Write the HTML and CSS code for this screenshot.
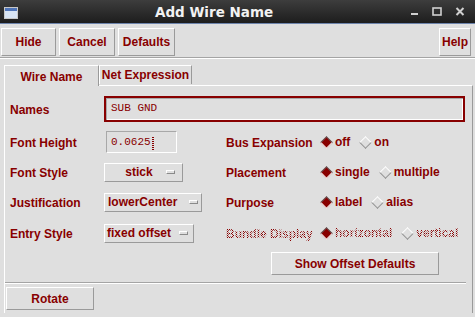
FILE: index.html
```html
<!DOCTYPE html>
<html lang="en">
<head>
    <meta charset="UTF-8">
    <title>Add Wire Name</title>
    <link rel="stylesheet" href="styles.css">
</head>
<body>
    <div class="titlebar">
        <svg class="win-icon" width="14" height="12" viewBox="0 0 14 12">
            <rect x="0.5" y="0.5" width="13" height="11" fill="#d8e4f4" stroke="#c8c8c8"/>
            <rect x="1" y="1" width="12" height="3" fill="#4f74b8"/>
        </svg>
        <span class="title">Add Wire Name</span>
        <div class="wm-controls">
            <svg width="9" height="9" viewBox="0 0 9 9"><rect x="1" y="6" width="7" height="2" fill="#d0d0d0"/></svg>
            <svg width="10" height="9" viewBox="0 0 10 9"><rect x="1" y="1" width="8" height="7" fill="none" stroke="#d0d0d0" stroke-width="1.6"/></svg>
            <svg width="10" height="9" viewBox="0 0 10 9"><path d="M1.5 1 L8.5 8 M8.5 1 L1.5 8" stroke="#d0d0d0" stroke-width="2"/></svg>
        </div>
    </div>

    <div class="toolbar">
        <button class="btn tb-hide">Hide</button>
        <button class="btn tb-cancel">Cancel</button>
        <button class="btn tb-defaults">Defaults</button>
        <button class="btn tb-help">Help</button>
    </div>

    <div class="tabs">
        <div class="tab active">Wire Name</div>
        <div class="tab">Net Expression</div>
    </div>

    <div class="panel">
        <div class="names-row">
            <span class="lbl">Names</span>
            <div class="entry names">SUB GND</div>
        </div>

        <div class="form-grid">
            <span class="lbl">Font Height</span>
            <div class="entry height">0.0625<span class="cursor"></span></div>
            <span class="lbl">Bus Expansion</span>
            <div class="radios">
                <span class="radio on"><i class="dia"></i>off</span>
                <span class="radio"><i class="dia"></i>on</span>
            </div>

            <span class="lbl">Font Style</span>
            <div class="menu menu-style"><span class="menu-text center">stick</span><i class="ind"></i></div>
            <span class="lbl">Placement</span>
            <div class="radios">
                <span class="radio on"><i class="dia"></i>single</span>
                <span class="radio"><i class="dia"></i>multiple</span>
            </div>

            <span class="lbl">Justification</span>
            <div class="menu menu-just"><span class="menu-text">lowerCenter</span><i class="ind"></i></div>
            <span class="lbl">Purpose</span>
            <div class="radios">
                <span class="radio on"><i class="dia"></i>label</span>
                <span class="radio"><i class="dia"></i>alias</span>
            </div>

            <span class="lbl">Entry Style</span>
            <div class="menu menu-entry"><span class="menu-text">fixed offset</span><i class="ind"></i></div>
            <span class="lbl stipple">Bundle Display</span>
            <div class="radios">
                <span class="radio on"><i class="dia"></i><span class="stipple">horizontal</span></span>
                <span class="radio"><i class="dia"></i><span class="stipple">vertical</span></span>
            </div>
        </div>

        <div class="actions">
            <button class="btn offsets">Show Offset Defaults</button>
        </div>

        <div class="sep"></div>
        <button class="btn rotate">Rotate</button>
    </div>
</body>
</html>
```

FILE: styles.css
```css
:root {
    --bg: #dfdfdf;
    --ink: #880000;
    --shade: #9a9a9a;
    --light: #ffffff;
}

* {
    box-sizing: border-box;
}

body {
    margin: 0;
    width: 475px;
    height: 317px;
    overflow: hidden;
    background-color: var(--bg);
    color: var(--ink);
    font: bold 12px "Liberation Sans", Arial, sans-serif;
}

/* window manager title bar */
.titlebar {
    height: 24px;
    display: flex;
    align-items: center;
    background: linear-gradient(#3d3d3d, #1d1d1d);
    border-bottom: 1px solid #6d84ac;
}

.win-icon {
    margin-left: 4px;
    margin-top: 2px;
}

.title {
    margin-left: 137px;
    color: #f2f2f2;
    font: bold 13.5px "DejaVu Sans", sans-serif;
}

.wm-controls {
    margin-left: auto;
    margin-right: 10px;
    display: flex;
    gap: 13px;
}

/* buttons */
.btn {
    margin: 0;
    padding: 0;
    height: 28px;
    background-color: var(--bg);
    color: var(--ink);
    font: inherit;
    border: 1px solid;
    border-color: var(--light) var(--shade) var(--shade) var(--light);
}

.toolbar {
    display: flex;
    gap: 3px;
    padding: 4px 4px 1px 1px;
    border-bottom: 1px solid #a4a4a4;
    box-shadow: 0 1px 0 var(--light);
}

.tb-hide { width: 55px; }
.tb-cancel { width: 56px; }
.tb-defaults { width: 57px; }
.tb-help { width: 32px; margin-left: auto; }

/* notebook tabs */
.tabs {
    display: flex;
    align-items: flex-start;
    height: 20px;
    margin-top: 7px;
    padding-left: 4px;
}

.tab {
    height: 19px;
    display: flex;
    align-items: center;
    justify-content: center;
    border: 1px solid;
    border-color: var(--light) var(--shade) transparent var(--light);
    border-bottom: none;
}

.tab.active {
    position: relative;
    z-index: 1;
    width: 95px;
    height: 21px;
    padding-top: 1px;
    background-color: var(--bg);
}

.tab:not(.active) {
    width: 93px;
}

.panel {
    width: 469px;
    height: 228px;
    margin-left: 4px;
    padding: 10px 0 0 5px;
    border-top: 1px solid var(--light);
    border-left: 1px solid var(--light);
    border-right: 1px solid var(--shade);
}

.lbl {
    white-space: nowrap;
}

.names-row {
    height: 26px;
    display: flex;
    align-items: center;
}

.names-row .lbl {
    width: 94px;
    padding-top: 1px;
}

.entry {
    display: flex;
    align-items: center;
    font: 11px "Liberation Mono", "Courier New", monospace;
}

.entry.names {
    width: 361px;
    height: 26px;
    padding-left: 5px;
    padding-bottom: 2px;
    border: 2px solid var(--ink);
    box-shadow: inset 1px 1px 0 #a8a8a8, inset -1px -1px 0 var(--light);
}

.entry.height {
    width: 71px;
    height: 22px;
    margin-left: 2px;
    padding-left: 4px;
    border: 1px solid;
    border-color: #a8a8a8 var(--light) var(--light) #a8a8a8;
}

.cursor {
    width: 2px;
    height: 13px;
    margin-left: 1px;
    margin-top: 3px;
    border-left: 1px dotted var(--ink);
    border-right: 1px dotted var(--ink);
}

.form-grid {
    display: grid;
    grid-template-columns: 94px 122px 94px 1fr;
    grid-template-rows: 30px 30px 30px 32px;
    align-items: center;
    margin-top: 5px;
}

.form-grid .lbl {
    padding-top: 2px;
}

/* option menus */
.menu {
    height: 19px;
    display: flex;
    align-items: center;
    justify-content: space-between;
    padding: 0 3px 1px 3px;
    border: 1px solid;
    border-color: var(--light) var(--shade) var(--shade) var(--light);
}

.menu-text.center {
    flex: 1;
    text-align: center;
    padding-left: 4px;
}

.ind {
    width: 9px;
    height: 4px;
    margin-top: 1px;
    border: 1px solid;
    border-color: var(--light) #8a8a8a #8a8a8a var(--light);
}

.menu-style { width: 79px; padding-right: 7px; }
.menu-just { width: 98px; }
.menu-entry { width: 90px; padding-left: 2px; padding-right: 5px; }

/* radio diamonds */
.radios {
    display: flex;
    align-items: center;
    gap: 9px;
}

.radio {
    display: flex;
    align-items: center;
}

.dia {
    width: 9px;
    height: 9px;
    margin: 0 4px 0 2px;
    transform: rotate(45deg);
    border: 1.5px solid;
    border-color: var(--light) #909090 #909090 var(--light);
}

.radio.on .dia {
    background-color: var(--ink);
    border-color: #666666 var(--light) var(--light) #666666;
}

.stipple {
    color: transparent;
    background: repeating-conic-gradient(var(--ink) 0 25%, transparent 0 50%) 0 0 / 2px 2px;
    -webkit-background-clip: text;
    background-clip: text;
}

.actions {
    margin-top: 3px;
    padding-left: 261px;
}

.btn.offsets {
    width: 168px;
    height: 23px;
}

.sep {
    width: 461px;
    margin-top: 7px;
    margin-left: -5px;
    border-top: 1px solid #a4a4a4;
    border-bottom: 1px solid var(--light);
}

.btn.rotate {
    width: 88px;
    height: 23px;
    margin-top: 3px;
    margin-left: -4px;
}
```
